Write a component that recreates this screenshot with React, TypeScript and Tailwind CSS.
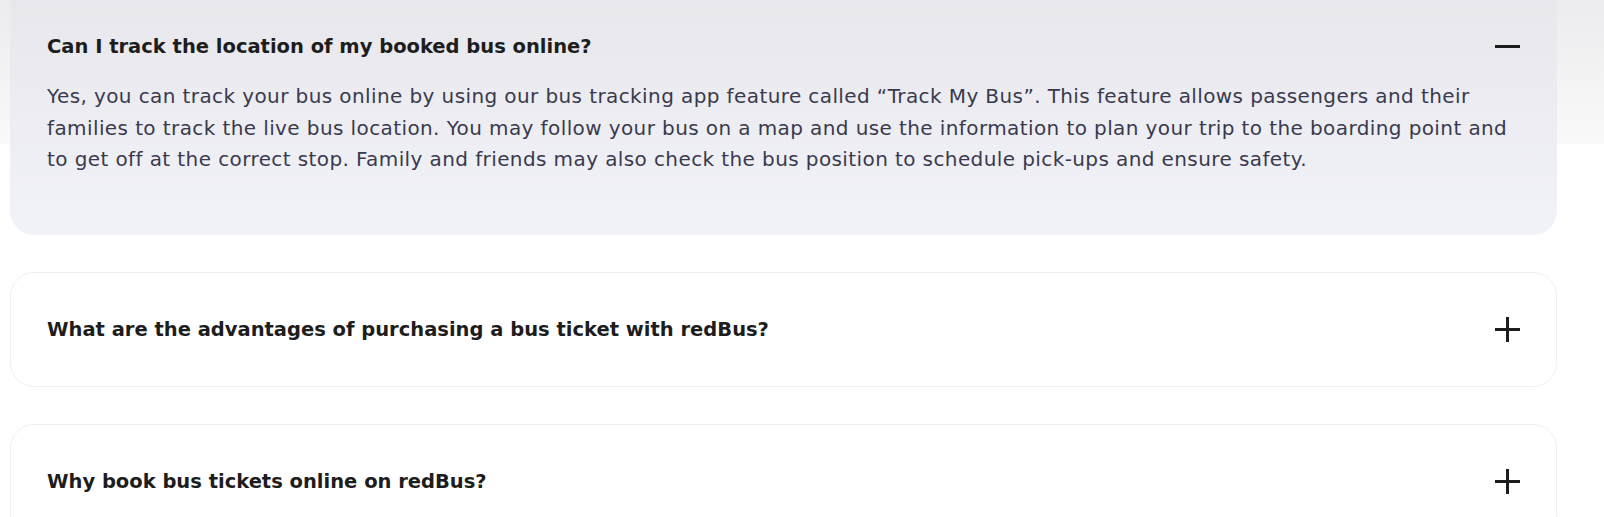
import type { ReactNode } from 'react';

const FONT = { fontFamily: '"DejaVu Sans", "Noto Sans", sans-serif' };

interface FaqItem {
  question: string;
  answer?: string;
}

const FAQS: FaqItem[] = [
  {
    question: 'Can I track the location of my booked bus online?',
    answer:
      'Yes, you can track your bus online by using our bus tracking app feature called \u201cTrack My Bus\u201d. This feature allows passengers and their families to track the live bus location. You may follow your bus on a map and use the information to plan your trip to the boarding point and to get off at the correct stop. Family and friends may also check the bus position to schedule pick-ups and ensure safety.',
  },
  { question: 'What are the advantages of purchasing a bus ticket with redBus?' },
  { question: 'Why book bus tickets online on redBus?' },
];

function ToggleIcon({ open }: { open: boolean }) {
  return (
    <svg width="25" height="25" viewBox="0 0 25 25" aria-hidden="true" className="shrink-0">
      <path d="M0 12.5H25" stroke="#1d1d1d" strokeWidth="3" />
      {!open && <path d="M12.5 0V25" stroke="#1d1d1d" strokeWidth="3" />}
    </svg>
  );
}

function Question({ children, open }: { children: ReactNode; open: boolean }) {
  return (
    <div className="flex items-center justify-between gap-6">
      <h3 className="text-[19.5px] font-bold leading-[27px] text-[#1d1d1d]">{children}</h3>
      <ToggleIcon open={open} />
    </div>
  );
}

export default function App() {
  const [first, ...rest] = FAQS;
  return (
    <div
      className="min-h-[517px] w-full bg-[linear-gradient(180deg,#ececee_0px,#f9f9fa_143px,#ffffff_145px)] pl-[10px] pr-[47px]"
      style={FONT}
    >
      <div className="flex flex-col gap-[37px]">
        <div className="rounded-b-3xl bg-[linear-gradient(180deg,#e7e7ec_0%,#f2f3f8_100%)] px-[37px] pb-[59px] pt-[33px]">
          <Question open>{first.question}</Question>
          <p className="mt-[21px] max-w-[1468px] text-[20px] leading-[31.5px] tracking-[0.4px] text-[#3a3a4e]">
            {first.answer}
          </p>
        </div>
        {rest.map((item) => (
          <div key={item.question} className="rounded-3xl border border-[#efeff4] bg-white px-[36px] py-[43px]">
            <Question open={false}>{item.question}</Question>
          </div>
        ))}
      </div>
    </div>
  );
}
